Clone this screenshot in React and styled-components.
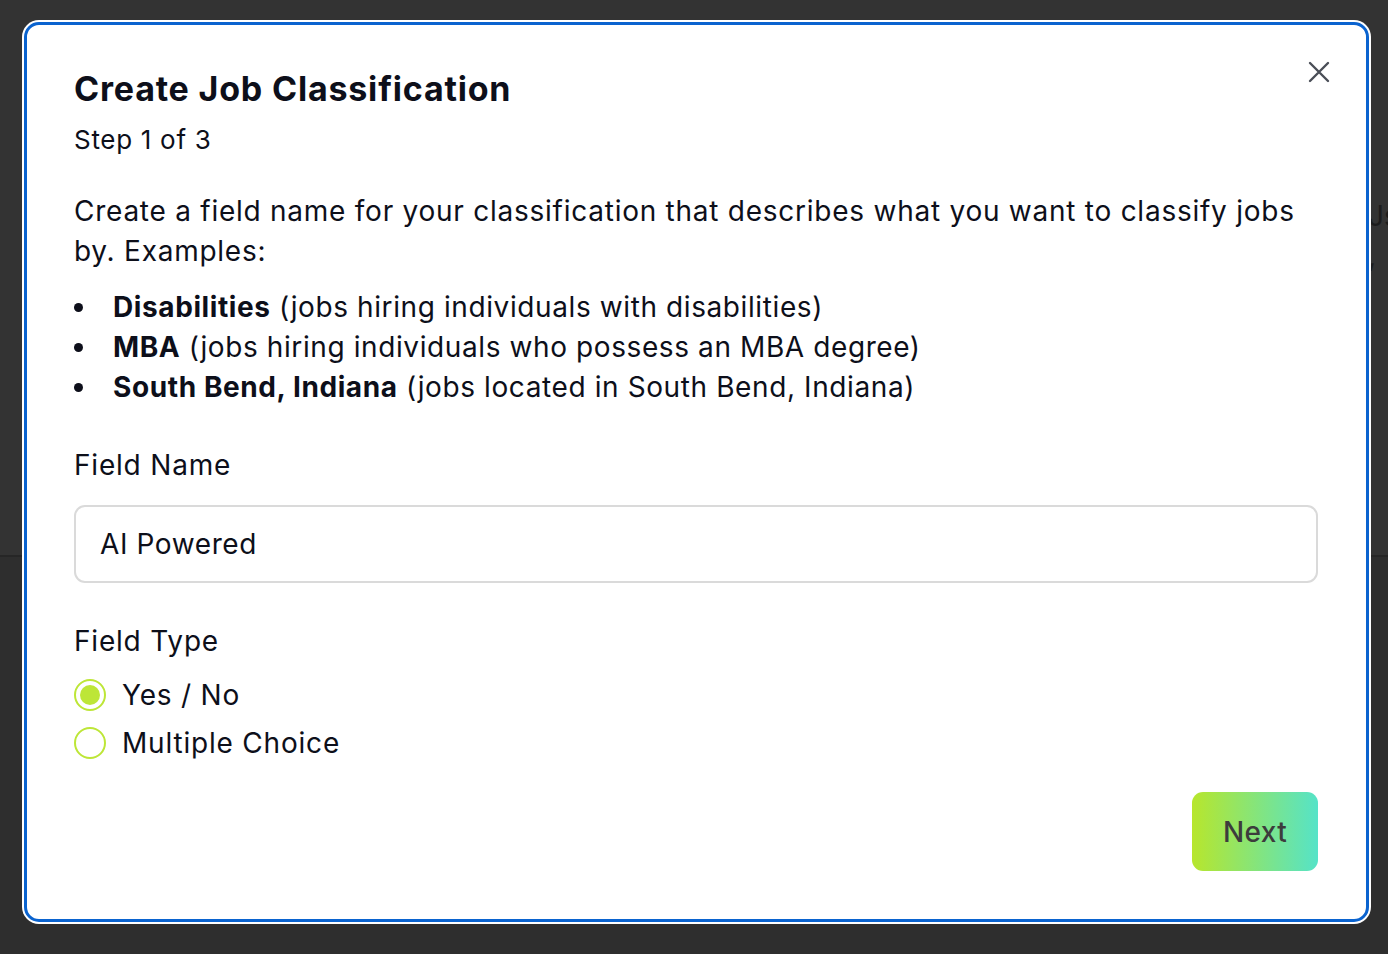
import React, { useState } from 'react';
import styled, { createGlobalStyle } from 'styled-components';

const GlobalStyle = createGlobalStyle`
  html, body {
    margin: 0;
    padding: 0;
    background: #333333;
  }
  * {
    box-sizing: border-box;
  }
`;

const SPage = styled.div`
  position: relative;
  min-height: 954px;
  padding: 22px 19px 32px 24px;
  background: linear-gradient(to bottom, #333333 0, #333333 555px, #262626 555px, #262626 557px, #2e2e2e 557px);
  font-family: Inter, 'Noto Sans', sans-serif;
  color: #0d0f1a;
  overflow: hidden;
`;

const SBackdropText = styled.div`
  position: absolute;
  left: 1368px;
  top: 196px;
  font-size: 28px;
  color: #1c1c1c;
  line-height: 40px;
`;

const SModal = styled.div`
  position: relative;
  width: 1345px;
  height: 900px;
  background: #ffffff;
  border: 3px solid #0a63cf;
  border-radius: 15px;
  box-shadow: 0 0 0 2px #ffffff;
  padding: 42px 48px 48px 47px;
  display: flex;
  flex-direction: column;
  letter-spacing: 0.6px;
`;

const SClose = styled.button`
  position: absolute;
  top: 33px;
  right: 33px;
  width: 28px;
  height: 28px;
  padding: 0;
  border: none;
  background: none;
  cursor: pointer;
  display: flex;
  align-items: center;
  justify-content: center;
`;

const STitle = styled.h2`
  margin: 0;
  font-size: 34px;
  line-height: 44px;
  font-weight: 700;
  letter-spacing: 0.8px;
`;

const SStep = styled.p`
  margin: 11px 0 0;
  font-size: 26px;
  line-height: 36px;
  letter-spacing: 0.7px;
`;

const SText = styled.p`
  margin: 33px 0 0;
  font-size: 28px;
  line-height: 40px;
  letter-spacing: 0.75px;
`;

const SList = styled.ul`
  margin: 16px 0 0;
  padding: 0;
  list-style: none;
  font-size: 28px;
  line-height: 40px;

  b {
    font-weight: 700;
  }
`;

const SItem = styled.li`
  position: relative;
  padding-left: 39px;

  &::before {
    content: '';
    position: absolute;
    left: 0;
    top: 16px;
    width: 9px;
    height: 9px;
    border-radius: 50%;
    background: #0d0f1a;
  }
`;

const SLabel = styled.label`
  display: block;
  margin-top: 40px;
  font-size: 28px;
  line-height: 36px;
  letter-spacing: 0.8px;
`;

const SInput = styled.input`
  display: block;
  width: 100%;
  height: 78px;
  margin-top: 22px;
  padding: 0 24px;
  border: 2px solid #dadada;
  border-radius: 11px;
  font-family: inherit;
  font-size: 28px;
  letter-spacing: 0.6px;
  color: #0d0f1a;
  outline: none;
`;

const SRadioGroup = styled.div`
  display: flex;
  flex-direction: column;
  gap: 8px;
  margin-top: 16px;
`;

const SRadioRow = styled.label`
  display: flex;
  align-items: center;
  gap: 16px;
  height: 40px;
  font-size: 28px;
  letter-spacing: 0.8px;
  cursor: pointer;
`;

const SRadio = styled.span`
  width: 32px;
  height: 32px;
  border-radius: 50%;
  border: 2px solid #bde637;
  display: flex;
  align-items: center;
  justify-content: center;

  &::after {
    content: '';
    width: 20px;
    height: 20px;
    border-radius: 50%;
    background: ${(p) => (p.checked ? '#bde637' : 'transparent')};
  }
`;

const SFooter = styled.div`
  display: flex;
  justify-content: flex-end;
  margin-top: 29px;
`;

const SButton = styled.button`
  width: 126px;
  height: 79px;
  border: none;
  border-radius: 11px;
  background: linear-gradient(to right, #b7e62c, #55e3c8);
  font-family: inherit;
  font-size: 28px;
  font-weight: 500;
  letter-spacing: 0.4px;
  color: #3c3c3c;
  cursor: pointer;
`;

const types = ['Yes / No', 'Multiple Choice'];

function App() {
  const [name, setName] = useState('AI Powered');
  const [type, setType] = useState(types[0]);

  return (
    <SPage>
      <GlobalStyle />
      <SBackdropText>Js<br />,</SBackdropText>
      <SModal>
        <SClose aria-label="Close">
          <svg width="22" height="22" viewBox="0 0 22 22">
            <path d="M2 2L20 20M20 2L2 20" stroke="#4a4e57" strokeWidth="2.4" strokeLinecap="round" />
          </svg>
        </SClose>
        <STitle>Create Job Classification</STitle>
        <SStep>Step 1 of 3</SStep>
        <SText>
          Create a field name for your classification that describes what you want to classify jobs by. Examples:
        </SText>
        <SList>
          <SItem><b>Disabilities</b> (jobs hiring individuals with disabilities)</SItem>
          <SItem><b>MBA</b> (jobs hiring individuals who possess an MBA degree)</SItem>
          <SItem><b>South Bend, Indiana</b> (jobs located in South Bend, Indiana)</SItem>
        </SList>
        <SLabel>Field Name</SLabel>
        <SInput value={name} onChange={(e) => setName(e.target.value)} />
        <SLabel>Field Type</SLabel>
        <SRadioGroup>
          {types.map((t) => (
            <SRadioRow key={t} onClick={() => setType(t)}>
              <SRadio checked={type === t} />
              {t}
            </SRadioRow>
          ))}
        </SRadioGroup>
        <SFooter>
          <SButton>Next</SButton>
        </SFooter>
      </SModal>
    </SPage>
  );
}

export default App;
